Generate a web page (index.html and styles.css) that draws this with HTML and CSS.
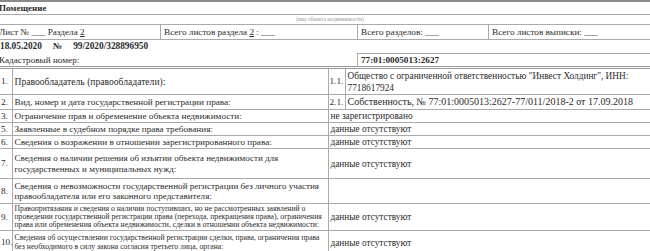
FILE: index.html
```html
<!DOCTYPE html>
<html lang="ru">
<head>
<meta charset="utf-8">
<link rel="stylesheet" href="styles.css">
</head>
<body>
<div class="doc">
  <div class="title">Помещение</div>
  <div class="caption">(вид объекта недвижимости)</div>
  <div class="sheets">
    <div class="sc c1">Лист № ___ Раздела <u>2</u></div>
    <div class="sc c2">Всего листов раздела <u>2</u> : ___</div>
    <div class="sc c3">Всего разделов: ___</div>
    <div class="sc c4">Всего листов выписки: ___</div>
  </div>
  <div class="dateline"><span class="d1">18.05.2020</span><span class="d2">№</span><span>99/2020/328896950</span></div>
  <div class="cadastr">
    <div class="cad-label">Кадастровый номер:</div>
    <div class="cad-val">77:01:0005013:2627</div>
  </div>
  <table class="main">
    <colgroup><col class="cn"><col class="cl"><col class="cs"><col class="cv"></colgroup>
    <tr class="r1"><td class="n">1.</td><td class="l1">Правообладатель (правообладатели):</td><td class="s">1.1.</td><td class="v">Общество с ограниченной ответственностью "Инвест Холдинг", ИНН: 7718617924</td></tr>
    <tr class="r2"><td class="n">2.</td><td>Вид, номер и дата государственной регистрации права:</td><td class="s">2.1.</td><td class="v num">Собственность, № 77:01:0005013:2627-77/011/2018-2 от 17.09.2018</td></tr>
    <tr class="r3"><td class="n">3.</td><td>Ограничение прав и обременение объекта недвижимости:</td><td class="v" colspan="2">не зарегистрировано</td></tr>
    <tr class="r5"><td class="n">5.</td><td>Заявленные в судебном порядке права требования:</td><td class="v" colspan="2">данные отсутствуют</td></tr>
    <tr class="r6"><td class="n">6.</td><td>Сведения о возражении в отношении зарегистрированного права:</td><td class="v" colspan="2">данные отсутствуют</td></tr>
    <tr class="r7"><td class="n">7.</td><td class="two">Сведения о наличии решения об изъятии объекта недвижимости для государственных и муниципальных нужд:</td><td class="v" colspan="2">данные отсутствуют</td></tr>
    <tr class="r8"><td class="n">8.</td><td class="big">Сведения о невозможности государственной регистрации без личного участия правообладателя или его законного представителя:</td><td class="v" colspan="2"></td></tr>
    <tr class="r9"><td class="n">9.</td><td class="small">Правопритязания и сведения о наличии поступивших, но не рассмотренных заявлений о проведении государственной регистрации права (перехода, прекращения права), ограничения права или обременения объекта недвижимости, сделки в отношении объекта недвижимости:</td><td class="v" colspan="2">данные отсутствуют</td></tr>
    <tr class="r10"><td class="n">10.</td><td class="small">Сведения об осуществлении государственной регистрации сделки, права, ограничения права без необходимого в силу закона согласия третьего лица, органа:</td><td class="v" colspan="2">данные отсутствуют</td></tr>
  </table>
</div>
</body>
</html>
```
FILE: styles.css
```css
html, body { margin: 0; padding: 0; background: #fff; }
body { overflow: hidden; }
.doc {
  font-family: "Liberation Serif", "Times New Roman", serif;
  font-size: 9.2px;
  color: #2b2b2b;
  margin-left: -2px;
  width: 654px;
  border-top: 2px solid #8a8a8a;
}
.title {
  font-weight: bold;
  font-size: 9px;
  height: 12px;
  line-height: 12px;
  padding-left: 1px;
  border-bottom: 1px solid #aaa;
}
.caption {
  font-size: 5.5px;
  color: #9a9a9a;
  text-align: center;
  height: 9px;
  line-height: 9px;
  padding-left: 10px;
}
.sheets {
  display: grid;
  grid-template-columns: 162px 197px 131px 1fr;
  border-top: 1px solid #aaa;
  border-bottom: 1px solid #aaa;
  height: 14px;
}
.sc { line-height: 14px; padding-left: 3px; }
.sc + .sc { border-left: 1px solid #aaa; }
.c1 { padding-left: 1px; }
.dateline {
  font-weight: bold;
  font-size: 9.3px;
  height: 13px;
  line-height: 13px;
  padding-left: 2px;
}
.d1 { margin-right: 11px; }
.d2 { margin-right: 11px; }
.cadastr {
  display: grid;
  grid-template-columns: 359px 1fr;
  height: 13px;
}
.cad-label { line-height: 14px; padding-left: 1px; }
.cad-val {
  font-weight: bold;
  border-top: 1px solid #aaa;
  border-left: 1px solid #aaa;
  padding-left: 3px;
  line-height: 12px;
}
.main {
  border-collapse: collapse;
  width: 654px;
  border-top: 3px double #999;
  table-layout: fixed;
}
.cn { width: 14px; }
.cl { width: 316px; }
.cs { width: 17px; }
.main td {
  border: 1px solid #aaa;
  padding: 0 2px;
  vertical-align: middle;
  line-height: 11px;
}
.main td.n { padding: 0 0 0 3px; border-left: none; }
.main td.s { padding: 0 1px; }
.main td.v { font-size: 9.3px; line-height: 12px; }
.main td.num { font-size: 10px; }
.main td.l1 { font-size: 9.6px; }
.main td.two { font-size: 9px; line-height: 10.5px; }
.main td.big { font-size: 9.1px; line-height: 10.5px; }
.main td.small { font-size: 7.7px; line-height: 8.3px; }
.r1 { height: 27px; }
.r2 { height: 15px; }
.r3 { height: 13px; }
.r5 { height: 13px; }
.r6 { height: 12px; }
.r7 { height: 30px; }
.r8 { height: 25px; }
.r9 { height: 27px; }
.r10 { height: 24px; }
```
